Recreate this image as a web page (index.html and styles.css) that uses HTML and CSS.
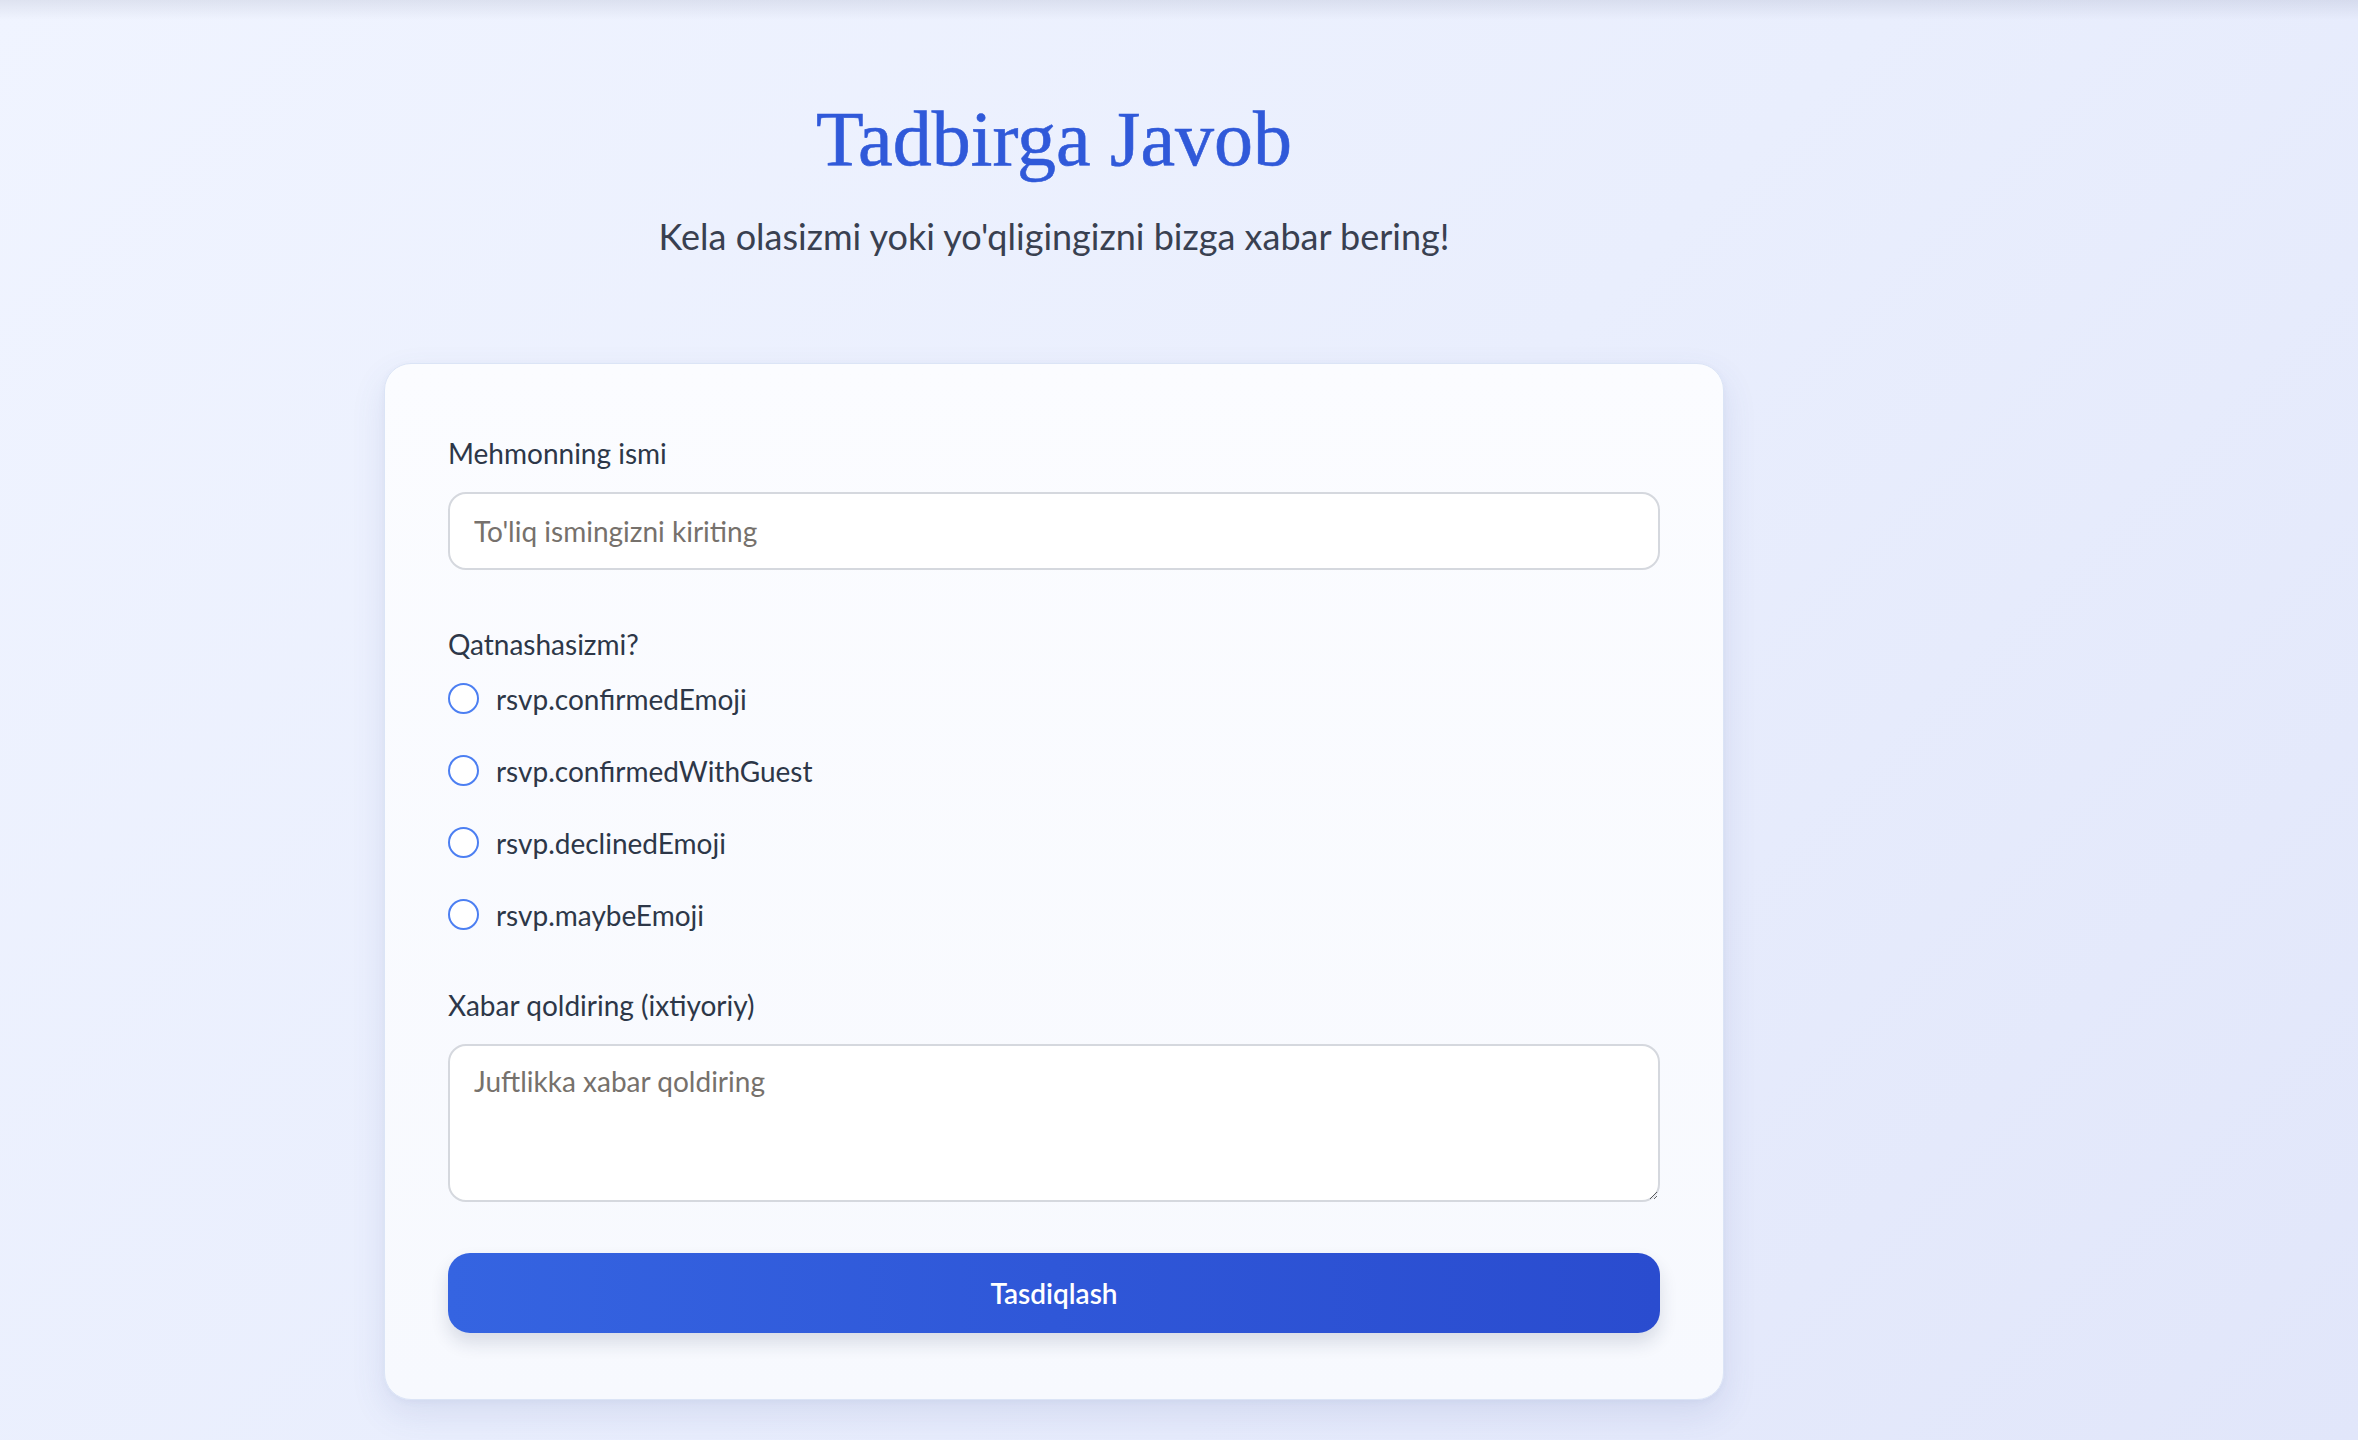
FILE: index.html
```html
<!DOCTYPE html>
<html lang="uz">
<head>
<meta charset="utf-8">
<title>Tadbirga Javob</title>
<link rel="stylesheet" href="styles.css">
</head>
<body>
<main class="page">
  <header class="hero">
    <h1 class="hero-title">Tadbirga Javob</h1>
    <p class="hero-sub">Kela olasizmi yoki yo'qligingizni bizga xabar bering!</p>
  </header>
  <form class="card">
    <div class="field field-name">
      <label class="label" for="name">Mehmonning ismi</label>
      <input class="input" id="name" type="text" placeholder="To'liq ismingizni kiriting">
    </div>
    <div class="field field-attend">
      <div class="label label-tight">Qatnashasizmi?</div>
      <div class="radios">
        <label class="radio-row"><input class="radio" type="radio" name="att"><span>rsvp.confirmedEmoji</span></label>
        <label class="radio-row"><input class="radio" type="radio" name="att"><span>rsvp.confirmedWithGuest</span></label>
        <label class="radio-row"><input class="radio" type="radio" name="att"><span>rsvp.declinedEmoji</span></label>
        <label class="radio-row"><input class="radio" type="radio" name="att"><span>rsvp.maybeEmoji</span></label>
      </div>
    </div>
    <div class="field field-msg">
      <label class="label" for="msg">Xabar qoldiring (ixtiyoriy)</label>
      <textarea class="textarea" id="msg" placeholder="Juftlikka xabar qoldiring"></textarea>
    </div>
    <button class="submit" type="button">Tasdiqlash</button>
  </form>
</main>
</body>
</html>
```

FILE: styles.css
```css
html, body {
  margin: 0;
  padding: 0;
}
body {
  min-height: 100vh;
  font-family: Lato, "Noto Sans", sans-serif;
  color: #2d3748;
  background:
    linear-gradient(to bottom, rgba(40, 50, 90, 0.09), rgba(40, 50, 90, 0) 20px),
    linear-gradient(135deg, #f0f4ff 0%, #e9eefd 50%, #e1e6fa 100%);
  background-attachment: fixed;
}
.page {
  width: 1340px;
  margin-left: 384px;
  padding-top: 92px;
  padding-bottom: 40px;
}
.hero {
  text-align: center;
}
.hero-title {
  margin: 0;
  font-family: "Liberation Serif", "Times New Roman", serif;
  font-weight: 400;
  font-size: 78px;
  line-height: 1.2;
  color: #3059d9;
  -webkit-text-stroke: 0.6px #3059d9;
}
.hero-sub {
  margin: 23px 0 0;
  font-size: 36px;
  line-height: 1.5;
  color: #394050;
}
.card {
  margin-top: 100px;
  box-sizing: border-box;
  width: 1340px;
  padding: 68px 63px 66px;
  border: 1px solid #dbe4f6;
  border-radius: 27px;
  background: linear-gradient(180deg, #fbfcff 0%, #f7f9fe 100%);
  box-shadow: 0 14px 34px rgba(70, 90, 160, 0.12), 0 2px 6px rgba(70, 90, 160, 0.05);
  display: flex;
  flex-direction: column;
}
.field {
  display: flex;
  flex-direction: column;
}
.field-attend {
  margin-top: 53px;
}
.field-msg {
  margin-top: 48px;
}
.label {
  font-size: 28px;
  line-height: 42px;
  color: #2d3748;
  margin-bottom: 18px;
}
.label-tight {
  margin-bottom: 13px;
}
.input,
.textarea {
  box-sizing: border-box;
  width: 100%;
  border: 2px solid #d5d8de;
  border-radius: 18px;
  background: #ffffff;
  font-family: Lato, "Noto Sans", sans-serif;
  font-size: 28px;
  color: #2d3748;
  padding: 0 24px;
  outline: none;
}
.input {
  height: 78px;
}
.textarea {
  height: 158px;
  padding: 14px 24px;
  line-height: 42px;
  resize: vertical;
  display: block;
}
.input::placeholder,
.textarea::placeholder {
  color: #76716c;
}
.radios {
  display: flex;
  flex-direction: column;
  gap: 30px;
}
.radio-row {
  display: flex;
  align-items: center;
  gap: 17px;
  height: 42px;
  font-size: 28px;
  line-height: 42px;
  color: #2d3748;
  cursor: pointer;
}
.radio {
  appearance: none;
  -webkit-appearance: none;
  margin: 0;
  width: 31px;
  height: 31px;
  border: 2px solid #4c7ff2;
  border-radius: 50%;
  background: #ffffff;
  flex: none;
}
.submit {
  margin-top: 51px;
  height: 80px;
  width: 100%;
  border: none;
  border-radius: 22px;
  background: linear-gradient(90deg, #3564e1 0%, #2f57d8 50%, #2a4ccf 100%);
  color: #ffffff;
  font-family: Lato, "Noto Sans", sans-serif;
  font-size: 28px;
  font-weight: 600;
  box-shadow: 0 10px 18px rgba(30, 40, 80, 0.14);
  cursor: pointer;
}
```
